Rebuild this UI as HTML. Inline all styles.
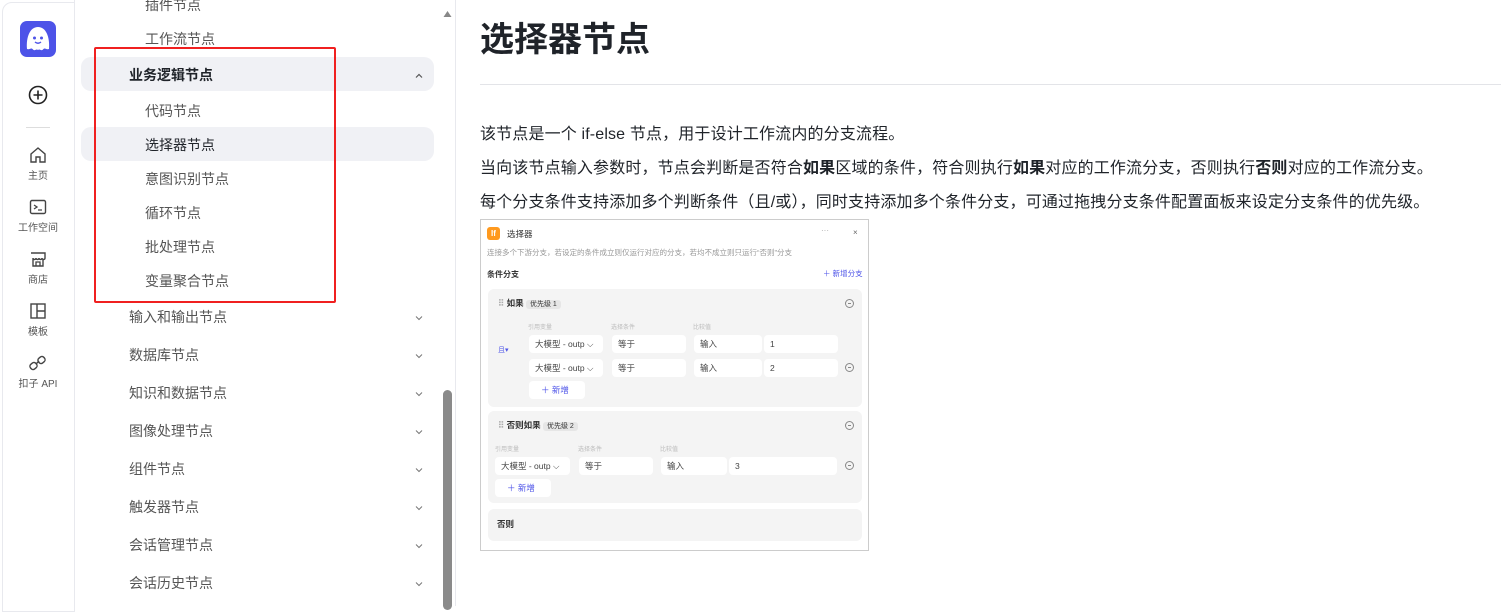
<!DOCTYPE html>
<html><head><meta charset="utf-8"><style>
*{margin:0;padding:0;box-sizing:border-box}
body{width:1501px;height:606px;overflow:hidden;background:#fff;font-family:"Liberation Sans","Noto Sans CJK SC",sans-serif;position:relative;color:#1f2329}
.rail{position:absolute;left:2px;top:2px;width:73px;height:610px;border:1px solid #e8e9ee;border-radius:10px 0 0 0;background:#fff}
.logo{position:absolute;left:20px;top:21px;width:36px;height:36px;border-radius:7px;background:#4d53e8}
.ri{position:absolute;left:0;width:76px;text-align:center;font-size:10px;color:#555}
.ri svg{display:block;margin:0 auto 3px}
.it{position:absolute;font-size:14px;color:#555;}
.sub{left:145px}
.grp{left:129px}
.chev{position:absolute;left:414px;width:10px;height:10px}
.hl{position:absolute;left:81px;width:353px;height:34px;background:#f0f1f5;border-radius:10px}
.sb{position:absolute;left:443px;top:390px;width:9px;height:220px;background:#8a8a8a;border-radius:5px}
p.t{position:absolute;left:480px;font-size:16px;color:#1f2329;white-space:nowrap;letter-spacing:0.15px}
.shot{position:absolute;left:480px;top:219px;width:389px;height:332px;border:1px solid #ccc;background:#fff;font-size:8px;color:#333}
.box{position:absolute;background:#f4f4f4;border-radius:6px;left:7px;width:374px}
.sel{position:absolute;background:#fff;border-radius:4px;height:18px;font-size:8.5px;line-height:18px;padding-left:6px;color:#444}
.lab{position:absolute;font-size:6px;color:#bbb}
.min{position:absolute;width:9px;height:9px;border:1px solid #888;border-radius:50%}
.min:after{content:"";position:absolute;left:2px;top:3px;width:3px;border-top:1px solid #888}
</style></head><body>
<div class="rail"></div>
<div class="logo"><svg width="36" height="36" viewBox="0 0 36 36"><path d="M7 28 C6 16 10 6 18 6 C26 6 30 16 29 28 C26 29 25 26 23 28.5 C21 30.5 20 27.5 18 29 C16 27.5 15 30.5 13 28.5 C11 26 10 29 7 28Z" fill="#fff"/><circle cx="14.5" cy="17" r="1.5" fill="#4d53e8"/><circle cx="21.5" cy="17" r="1.5" fill="#4d53e8"/><path d="M15 21 Q18 23.5 21 21" stroke="#4d53e8" stroke-width="1.4" fill="none"/></svg></div>
<svg style="position:absolute;left:28px;top:85px" width="20" height="20"><circle cx="10" cy="10" r="8.5" stroke="#222" stroke-width="1.6" fill="none"/><path d="M10 5.5V14.5M5.5 10H14.5" stroke="#222" stroke-width="1.6"/></svg>
<div style="position:absolute;left:26px;top:127px;width:24px;border-top:1px solid #ddd"></div>
<div class="ri" style="top:146px"><svg width="18" height="18" viewBox="0 0 18 18"><path d="M2 8L9 2L16 8V16H11V11H7V16H2Z" stroke="#444" stroke-width="1.4" fill="none"/></svg>主页</div>
<div class="ri" style="top:198px"><svg width="18" height="18" viewBox="0 0 18 18"><rect x="1.5" y="2.5" width="15" height="13" rx="1.5" stroke="#444" stroke-width="1.4" fill="none"/><path d="M5 7L8 9L5 11M9 12H13" stroke="#444" stroke-width="1.3" fill="none"/></svg>工作空间</div>
<div class="ri" style="top:250px"><svg width="18" height="18" viewBox="0 0 18 18"><path d="M2 3H16V8C16 10 13 10 13 8C13 10 10 10 10 8C10 10 7 10 7 8C7 10 4 10 4 8V16H14V10" stroke="#444" stroke-width="1.4" fill="none"/><path d="M7 16V12H11V16" stroke="#444" stroke-width="1.3" fill="none"/></svg>商店</div>
<div class="ri" style="top:302px"><svg width="18" height="18" viewBox="0 0 18 18"><rect x="2" y="2" width="14" height="14" stroke="#444" stroke-width="1.4" fill="none"/><path d="M8 2V16M8 9H16" stroke="#444" stroke-width="1.4"/></svg>模板</div>
<div class="ri" style="top:354px"><svg width="20" height="18" viewBox="0 0 20 18"><rect x="2" y="9" width="7" height="6" rx="2.5" transform="rotate(-40 5.5 12)" stroke="#444" stroke-width="1.4" fill="none"/><rect x="10" y="3" width="7" height="6" rx="2.5" transform="rotate(-40 13.5 6)" stroke="#444" stroke-width="1.4" fill="none"/><path d="M8 10L11 7" stroke="#444" stroke-width="1.4"/></svg>扣子 API</div>
<div style="position:absolute;left:74px;top:0;height:606px;border-left:1px solid #e8e9ee"></div>
<div style="position:absolute;left:455px;top:0;height:606px;border-left:1px solid #e8e9ee"></div>

<div class="hl" style="top:57px"></div>
<div class="hl" style="top:127px"></div>
<div class="it sub" style="top:-5px">插件节点</div>
<div class="it sub" style="top:29px">工作流节点</div>
<div class="it grp" style="top:65px;color:#1f2329;font-weight:bold">业务逻辑节点</div>
<div class="it sub" style="top:101px">代码节点</div>
<div class="it sub" style="top:135px;color:#1f2329">选择器节点</div>
<div class="it sub" style="top:169px">意图识别节点</div>
<div class="it sub" style="top:203px">循环节点</div>
<div class="it sub" style="top:237px">批处理节点</div>
<div class="it sub" style="top:271px">变量聚合节点</div>
<div class="it grp" style="top:307px">输入和输出节点</div>
<div class="it grp" style="top:345px">数据库节点</div>
<div class="it grp" style="top:383px">知识和数据节点</div>
<div class="it grp" style="top:421px">图像处理节点</div>
<div class="it grp" style="top:459px">组件节点</div>
<div class="it grp" style="top:497px">触发器节点</div>
<div class="it grp" style="top:535px">会话管理节点</div>
<div class="it grp" style="top:573px">会话历史节点</div>
<svg class="chev" style="top:71px" viewBox="0 0 10 10"><path d="M2 6.5L5 3.5L8 6.5" stroke="#555" stroke-width="1.2" fill="none"/></svg>
<svg class="chev" style="top:313px" viewBox="0 0 10 10"><path d="M2 3.5L5 6.5L8 3.5" stroke="#777" stroke-width="1" fill="none"/></svg>
<svg class="chev" style="top:351px" viewBox="0 0 10 10"><path d="M2 3.5L5 6.5L8 3.5" stroke="#777" stroke-width="1" fill="none"/></svg>
<svg class="chev" style="top:389px" viewBox="0 0 10 10"><path d="M2 3.5L5 6.5L8 3.5" stroke="#777" stroke-width="1" fill="none"/></svg>
<svg class="chev" style="top:427px" viewBox="0 0 10 10"><path d="M2 3.5L5 6.5L8 3.5" stroke="#777" stroke-width="1" fill="none"/></svg>
<svg class="chev" style="top:465px" viewBox="0 0 10 10"><path d="M2 3.5L5 6.5L8 3.5" stroke="#777" stroke-width="1" fill="none"/></svg>
<svg class="chev" style="top:503px" viewBox="0 0 10 10"><path d="M2 3.5L5 6.5L8 3.5" stroke="#777" stroke-width="1" fill="none"/></svg>
<svg class="chev" style="top:541px" viewBox="0 0 10 10"><path d="M2 3.5L5 6.5L8 3.5" stroke="#777" stroke-width="1" fill="none"/></svg>
<svg class="chev" style="top:579px" viewBox="0 0 10 10"><path d="M2 3.5L5 6.5L8 3.5" stroke="#777" stroke-width="1" fill="none"/></svg>
<div style="position:absolute;left:94px;top:47px;width:242px;height:256px;border:2px solid #f02020;border-radius:2px"></div>
<svg style="position:absolute;left:443px;top:10px" width="9" height="8"><path d="M0.5 7L4.5 1L8.5 7Z" fill="#888"/></svg>
<div class="sb"></div>

<div style="position:absolute;left:480px;top:12px;font-size:34px;font-weight:bold;color:#1f2329">选择器节点</div>
<div style="position:absolute;left:480px;top:84px;width:1021px;border-top:1px solid #e3e4e8"></div>
<p class="t" style="top:120px">该节点是一个 if-else 节点，用于设计工作流内的分支流程。</p>
<p class="t" style="top:154px">当向该节点输入参数时，节点会判断是否符合<b>如果</b>区域的条件，符合则执行<b>如果</b>对应的工作流分支，否则执行<b>否则</b>对应的工作流分支。</p>
<p class="t" style="top:188px">每个分支条件支持添加多个判断条件（且/或），同时支持添加多个条件分支，可通过拖拽分支条件配置面板来设定分支条件的优先级。</p>

<div class="shot">
 <div style="position:absolute;left:6px;top:7px;width:13px;height:13px;background:#ff9a1f;border-radius:3px;color:#fff;font-size:8px;font-weight:bold;text-align:center;line-height:13px">If</div>
 <div style="position:absolute;left:26px;top:8px;font-size:8.5px">选择器</div>
 <div style="position:absolute;left:340px;top:6px;color:#aaa">···</div>
 <div style="position:absolute;left:372px;top:8px;color:#666">×</div>
 <div style="position:absolute;left:6px;top:27px;font-size:7.5px;color:#999;white-space:nowrap">连接多个下游分支，若设定的条件成立则仅运行对应的分支，若均不成立则只运行“否则”分支</div>
 <div style="position:absolute;left:6px;top:49px;font-size:8px;font-weight:bold">条件分支</div>
 <div style="position:absolute;left:342px;top:48px;font-size:7.5px;color:#4d53e8">＋ 新增分支</div>
 <div class="box" style="top:69px;height:118px">
  <div style="position:absolute;left:10px;top:8px;font-size:8.5px;font-weight:bold"><span style="color:#aaa">⠿</span> 如果 <span style="background:#e6e6e6;font-weight:normal;font-size:7px;padding:1px 4px;border-radius:3px">优先级 1</span></div>
  <div class="min" style="left:357px;top:10px"></div>
  <div class="lab" style="left:40px;top:33px">引用变量</div><div class="lab" style="left:123px;top:33px">选择条件</div><div class="lab" style="left:205px;top:33px">比较值</div>
  <div style="position:absolute;left:10px;top:56px;font-size:7px;color:#4d53e8">且▾</div>
  <div class="sel" style="left:41px;top:46px;width:74px">大模型 - outp ⌵</div>
  <div class="sel" style="left:124px;top:46px;width:74px">等于</div>
  <div class="sel" style="left:206px;top:46px;width:68px">输入</div>
  <div class="sel" style="left:276px;top:46px;width:74px">1</div>
  <div class="sel" style="left:41px;top:70px;width:74px">大模型 - outp ⌵</div>
  <div class="sel" style="left:124px;top:70px;width:74px">等于</div>
  <div class="sel" style="left:206px;top:70px;width:68px">输入</div>
  <div class="sel" style="left:276px;top:70px;width:74px">2</div>
  <div class="min" style="left:357px;top:74px"></div>
  <div class="sel" style="left:41px;top:92px;width:56px;color:#4d53e8;padding-left:12px">＋ 新增</div>
 </div>
 <div class="box" style="top:191px;height:92px">
  <div style="position:absolute;left:10px;top:8px;font-size:8.5px;font-weight:bold"><span style="color:#aaa">⠿</span> 否则如果 <span style="background:#e6e6e6;font-weight:normal;font-size:7px;padding:1px 4px;border-radius:3px">优先级 2</span></div>
  <div class="min" style="left:357px;top:10px"></div>
  <div class="lab" style="left:7px;top:33px">引用变量</div><div class="lab" style="left:90px;top:33px">选择条件</div><div class="lab" style="left:172px;top:33px">比较值</div>
  <div class="sel" style="left:7px;top:46px;width:75px">大模型 - outp ⌵</div>
  <div class="sel" style="left:91px;top:46px;width:74px">等于</div>
  <div class="sel" style="left:173px;top:46px;width:66px">输入</div>
  <div class="sel" style="left:241px;top:46px;width:108px">3</div>
  <div class="min" style="left:357px;top:50px"></div>
  <div class="sel" style="left:7px;top:68px;width:56px;color:#4d53e8;padding-left:12px">＋ 新增</div>
 </div>
 <div class="box" style="top:289px;height:32px">
  <div style="position:absolute;left:9px;top:9px;font-size:8.5px;font-weight:bold">否则</div>
 </div>
</div>
</body></html>
